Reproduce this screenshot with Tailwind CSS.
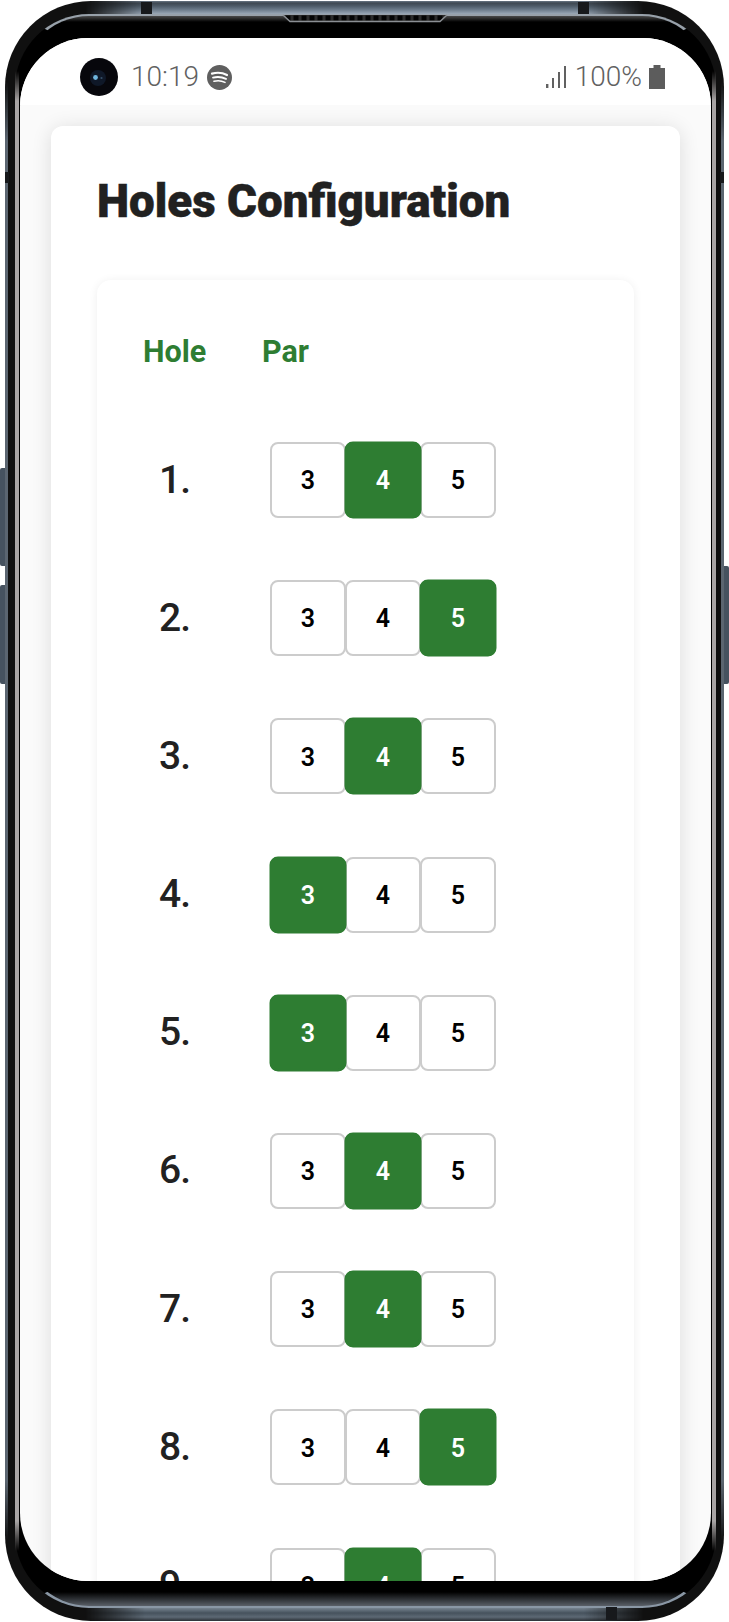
<!DOCTYPE html>
<html lang="en">
<head>
    <meta charset="UTF-8">
    <meta name="viewport" content="width=device-width, initial-scale=1.0">
    <title>Holes Configuration</title>
    <script src="https://cdn.jsdelivr.net/npm/@tailwindcss/browser@4"></script>
</head>
<body class="bg-white font-['Roboto',sans-serif]">
    <div class="relative w-[729px] h-[1622px] overflow-hidden bg-white">
        <!-- side buttons -->
        <div class="absolute left-0 top-[468px] w-[7px] h-[98px] rounded-l-[2px] bg-[#46525f]"></div>
        <div class="absolute left-0 top-[585px] w-[7px] h-[99px] rounded-l-[2px] bg-[#46525f]"></div>
        <div class="absolute right-0 top-[566px] w-[7px] h-[118px] rounded-r-[2px] bg-[#46525f]"></div>

        <!-- phone body -->
        <div class="absolute left-[5px] top-[1px] w-[719px] h-[1620px] rounded-[86px] bg-[#101010] pt-[13px] pl-[10px] pr-[8px] pb-[13px]">
            <div class="relative rounded-[74px] border-x-[4px] border-t-2 border-b-2 border-x-transparent border-t-[#98a1aa] border-b-[#8a97a5] bg-[linear-gradient(#4a4a4a,#000_6px,#000_calc(100%-14px),#5a6068)] pt-[22px] px-px h-full">
                <div id="screen" class="h-[1543px] rounded-[68px] overflow-hidden bg-[#fafafa]">
                    <!-- status bar -->
                    <div class="h-[67px] pt-[11px] bg-white flex items-center justify-between pl-[60px] pr-[46px] text-[#616161] text-[28px] font-light leading-none">
                        <div class="flex items-center">
                            <svg class="w-[38px] h-[38px]" viewBox="0 0 38 38">
                                <circle cx="19" cy="19" r="19" fill="#07070c"/>
                                <circle cx="18" cy="20" r="8" fill="#0f1828"/>
                                <circle cx="15.5" cy="19.5" r="2.4" fill="#6fb6e0"/>
                                <circle cx="21.5" cy="20" r="1.1" fill="#36506a"/>
                            </svg>
                            <span class="ml-[13px]">10:19</span>
                            <svg class="ml-[8px] w-[25px] h-[25px]" viewBox="0 0 25 25" fill="none" stroke="#fff" stroke-linecap="round">
                                <circle cx="12.5" cy="12.5" r="12.5" fill="#5f5f5f" stroke="none"/>
                                <path d="M5 8.6c5-1.4 10.5-1 15 1.4" stroke-width="2.2"/>
                                <path d="M6 12.6c4.5-1.1 9-.7 13 1.3" stroke-width="1.9"/>
                                <path d="M7 16.3c3.8-.9 7.6-.6 11 1.1" stroke-width="1.6"/>
                            </svg>
                        </div>
                        <div class="flex items-center">
                            <svg class="w-[20px] h-[22px]" viewBox="0 0 20 22" fill="#616161">
                                <rect x="0" y="18" width="2.4" height="4"/>
                                <rect x="6" y="12" width="2" height="10"/>
                                <rect x="12" y="6" width="2" height="16"/>
                                <rect x="18" y="0" width="2" height="22"/>
                            </svg>
                            <span class="ml-[9px]">100%</span>
                            <svg class="ml-[7px] w-[16px] h-[24px]" viewBox="0 0 16 24" fill="#5c5c5c">
                                <path d="M4.5 0h7v3H16v21H0V3h4.5z"/>
                            </svg>
                        </div>
                    </div>

                    <div class="pt-[21px] px-[31px]">
                        <div class="bg-white rounded-[12px] shadow-[0_2px_20px_rgba(0,0,0,0.12)] pt-[48px] px-[46px] pb-[46px]">
                            <h1 class="text-[45.7px] leading-[56px] font-black text-[#212121] [-webkit-text-stroke:0.5px_#212121]">Holes Configuration</h1>
                            <div class="mt-[50px] bg-white rounded-[14px] shadow-[0_1px_10px_rgba(0,0,0,0.07)] pt-[52px] px-[47px] pb-[40px]">
                                <div class="-ml-[1px] flex text-[#2e7d32] text-[30.5px] leading-[40px] font-bold">
                                    <div class="w-[63px]">Hole</div>
                                    <div class="ml-[56px]">Par</div>
                                </div>
                                <div id="rows" class="mt-[70px] flex flex-col gap-[62.2px]"></div>
                            </div>
                        </div>
                    </div>
                </div>
            </div>

            <!-- metal bands on the straight edges of the body -->
            <div class="absolute left-[80px] right-[80px] top-0 h-[13px] bg-[linear-gradient(#6a7785,#3e4852_2px,#4d5a67_5px,#6f7e8d_9px,#9aa8b6)] [mask-image:linear-gradient(90deg,transparent,#000_60px,#000_calc(100%-60px),transparent)]"></div>
            <div class="absolute left-[80px] right-[80px] bottom-0 h-[13px] bg-[linear-gradient(#76838f,#46525d_5px,#5c6874_9px,#2a3036)] [mask-image:linear-gradient(90deg,transparent,#000_60px,#000_calc(100%-60px),transparent)]"></div>
            <div class="absolute left-0 top-[80px] bottom-[80px] w-[3px] bg-[#5b6570] [mask-image:linear-gradient(transparent,#000_60px,#000_calc(100%-60px),transparent)]"></div>
            <div class="absolute right-0 top-[80px] bottom-[80px] w-[3px] bg-[#5b6570] [mask-image:linear-gradient(transparent,#000_60px,#000_calc(100%-60px),transparent)]"></div>
            <div class="absolute left-[10px] top-[70px] bottom-[70px] w-[4px] bg-[#a9a5a5] [mask-image:linear-gradient(transparent,#000_30px,#000_calc(100%-30px),transparent)]"></div>
            <div class="absolute right-[8px] top-[70px] bottom-[70px] w-[4px] bg-[#a9a5a5] [mask-image:linear-gradient(transparent,#000_30px,#000_calc(100%-30px),transparent)]"></div>
        </div>

        <!-- frame details that sit over the body -->
        <div class="absolute left-[141px] top-[2px] w-[11px] h-[12px] bg-[#17191c]"></div>
        <div class="absolute left-[578px] top-[2px] w-[11px] h-[12px] bg-[#17191c]"></div>
        <div class="absolute left-[606px] top-[1607px] w-[11px] h-[13px] bg-[#17191c]"></div>
        <div class="absolute left-[5px] top-[172px] w-[4px] h-[11px] bg-[#17191c]"></div>
        <div class="absolute left-[720px] top-[172px] w-[4px] h-[11px] bg-[#17191c]"></div>
        <svg class="absolute left-[281px] top-[14px] w-[168px] h-[10px]" viewBox="0 0 168 10">
            <defs>
                <pattern id="grille" width="8" height="6" patternUnits="userSpaceOnUse" x="3" y="1">
                    <rect width="8" height="6" fill="#2c2c2c"/>
                    <rect x="1.5" y="0.5" width="5" height="5" fill="#050505"/>
                </pattern>
            </defs>
            <path d="M2 1L9 7.5H159L166 1" fill="url(#grille)" stroke="#8b8f94" stroke-width="1.4"/>
        </svg>
    </div>

    <script>
        const pars = [4, 5, 4, 3, 3, 4, 4, 5, 4];

        function parButton(value, selected) {
            const look = selected
                ? 'relative z-10 bg-[#2e7d32] border-[#2e7d32] ring-[0.5px] ring-[#2e7d32] text-white'
                : 'bg-white border-[#cccccc] text-black';
            const overlap = value === 3 ? '' : '-ml-[1px]';
            return `<button class="w-[76px] h-[76px] pt-[2px] rounded-[8px] border-2 text-[25px] font-semibold ${overlap} ${look}">${value}</button>`;
        }

        document.getElementById('rows').innerHTML = pars.map((par, i) => `
            <div class="flex items-center">
                <div class="w-[61px] text-center text-[39px] leading-none font-medium tracking-[-1px] text-[#212121]">${i + 1}.</div>
                <div class="ml-[65px] flex">
                    ${[3, 4, 5].map((value) => parButton(value, value === par)).join('')}
                </div>
            </div>
        `).join('');
    </script>
</body>
</html>
